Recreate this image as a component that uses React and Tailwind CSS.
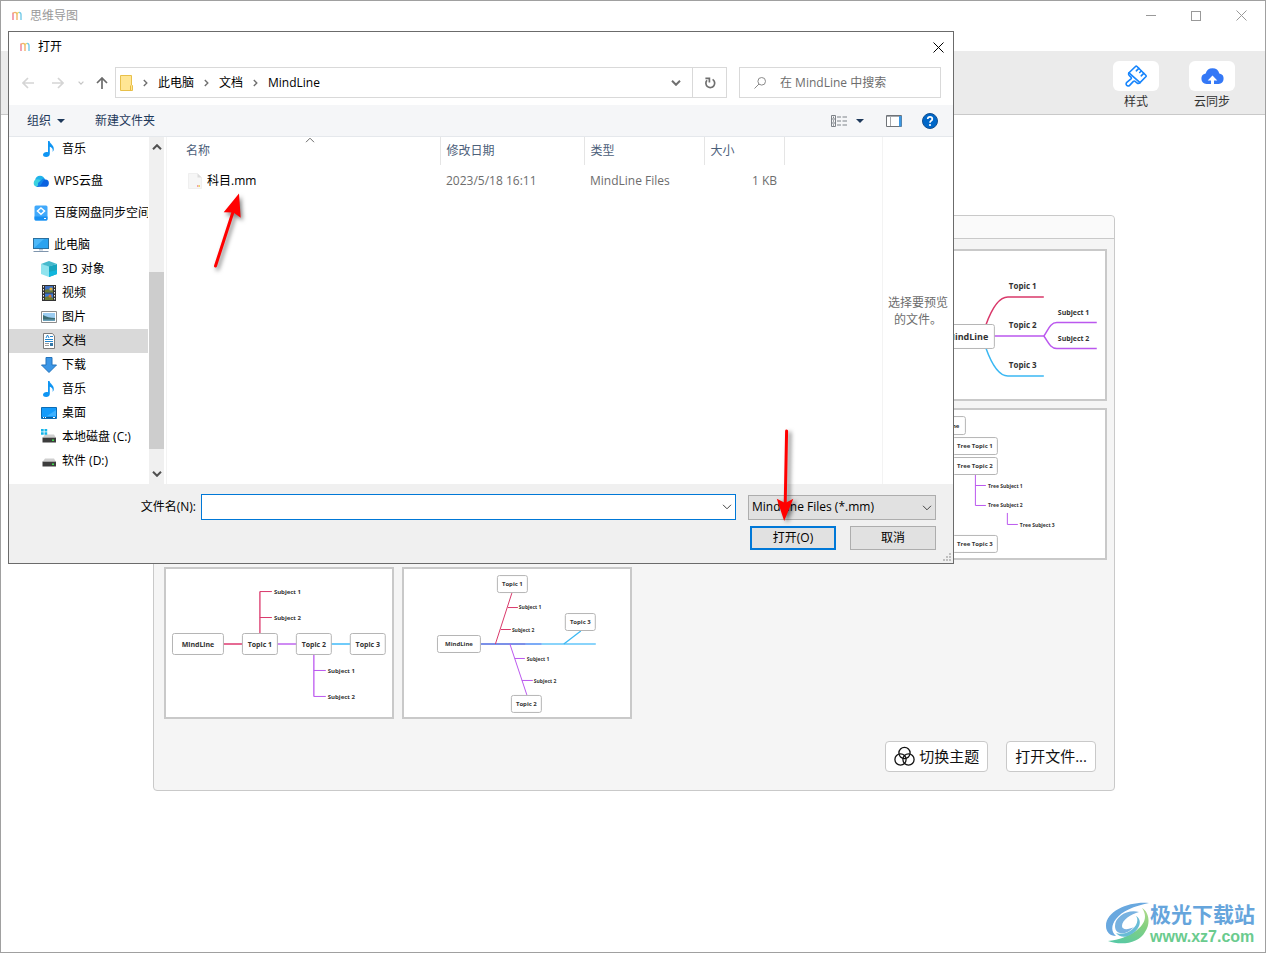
import React, { useState } from "react";

const UI_FONT = "font-['Open_Sans','Noto_Sans_CJK_SC',sans-serif]";

/* ---------- icons ---------- */

function AppMark() {
  return (
    <svg className="h-[10px] w-[10px]" viewBox="0 0 10 10" fill="none" strokeWidth="1.4">
      <path d="M1 9V1.4" stroke="#ee7d93" />
      <path d="M1 2.6Q1.8 1.4 3 1.4Q5 1.4 5 3.6V9" stroke="#f3b26b" />
      <path d="M5 3.4Q5.4 1.4 7 1.4" stroke="#e9d667" />
      <path d="M7 1.4Q9 1.4 9 3.6V9" stroke="#74cbe8" />
    </svg>
  );
}

function CloseIcon() {
  return (
    <svg className="h-[11px] w-[11px]" viewBox="0 0 11 11" fill="none" stroke="currentColor">
      <path d="M.5.5l10 10M10.5.5l-10 10" />
    </svg>
  );
}

function Chevron({ className }) {
  return (
    <svg className={className} viewBox="0 0 10 6" fill="none" stroke="currentColor">
      <path d="M1 .8l4 4 4-4" />
    </svg>
  );
}

function CrumbArrow() {
  return (
    <svg className="h-2 w-[5px] shrink-0 text-[#707070]" viewBox="0 0 5 8" fill="none" stroke="currentColor" strokeWidth="1.4">
      <path d="M.8 1l3 3-3 3" />
    </svg>
  );
}

function Caret() {
  return (
    <svg className="h-1 w-2" viewBox="0 0 8 4" fill="#1e395b">
      <path d="M0 0h8L4 4z" />
    </svg>
  );
}

function ArrowIcon({ className }) {
  return (
    <svg className={className} viewBox="0 0 12 12" fill="none" stroke="currentColor" strokeWidth="1.7">
      <path d="M12 6H1M6 1L1 6l5 5" />
    </svg>
  );
}

function FolderIcon() {
  return (
    <svg className="h-4 w-[13px] shrink-0" viewBox="0 0 13 16">
      <path d="M.5.5h11v9.5l1 .5v5H.5z" fill="#ffe694" stroke="#e8c04a" />
      <path d="M10.5 10.5v5" stroke="#e8b93c" />
    </svg>
  );
}

function RefreshIcon() {
  return (
    <svg className="h-3 w-3" viewBox="0 0 12 12" fill="none" stroke="#6f6f6f" strokeWidth="1.7">
      <path d="M8.6 2.4A4.4 4.4 0 1 1 3 3.2" />
      <path d="M1.4 1.4h4v4" />
    </svg>
  );
}

function SearchIcon() {
  return (
    <svg className="h-3 w-3 shrink-0" viewBox="0 0 12 12" fill="none" stroke="#8a8a8a">
      <circle cx="7.7" cy="4.3" r="3.8" />
      <path d="M5 7L.5 11.5" />
    </svg>
  );
}

function ViewIcon() {
  return (
    <svg className="h-3 w-4" viewBox="0 0 16 12" fill="none" stroke="#7d8288">
      <path d="M.5.5h4v11h-4zM.5 4h4M.5 8h4" />
      <path d="M6 2h4M11.5 2H16M6 6h4M11.5 6H16M6 10h4M11.5 10H16" />
      <path d="M2 2.2h1M2 6h1M2 10h1" stroke="#4f5358" />
    </svg>
  );
}

function PaneIcon() {
  return (
    <svg className="h-3 w-4" viewBox="0 0 16 12" fill="none">
      <path d="M.5.5h15v11H.5z" fill="#fff" stroke="#6f7378" />
      <path d="M1 1.5h14M4.5 2v9" stroke="#a5a8ac" />
      <path d="M13 1h2.5v10.5H13z" fill="#3b97e3" />
    </svg>
  );
}

function HelpIcon() {
  return (
    <svg className="h-4 w-4" viewBox="0 0 16 16" fill="none">
      <circle cx="8" cy="8" r="7.5" fill="#0067c8" stroke="#124f8f" />
      <path d="M5.7 6Q5.8 3.9 8 3.9T10.3 5.900Q10.3 7 9.2 7.7Q8 8.5 8 9.8" stroke="#fff" strokeWidth="1.7" />
      <circle cx="8" cy="12" r="1.1" fill="#fff" />
    </svg>
  );
}

function MusicIcon() {
  return (
    <svg className="h-4 w-4" viewBox="0 0 16 16" fill="#0f95f3">
      <path d="M7 0h1.5c.4 3 4.800 4 4.300 8.600-.2 1.400-.9 2-1.300 2.200.9-2.800-.6-4.200-2.700-5V13c0 1.800-1.700 3-3.700 3-1.700 0-3.100-.8-3.100-2.200 0-1.600 1.800-2.800 3.700-2.800.5 0 .9.1 1.300.2z" />
    </svg>
  );
}

function CloudDriveIcon() {
  return (
    <svg className="h-4 w-4" viewBox="0 0 16 16">
      <circle cx="7" cy="7.5" r="4.8" fill="#21b3ea" />
      <circle cx="4.5" cy="10" r="3.8" fill="#3cd2e0" />
      <path d="M3 13.800h9a3.600 3.600 0 0 0 .5-7.200Q9 7 7.500 10T3 13.800z" fill="#0b62e0" />
      <path d="M5 13.800Q8 13 9 10t3.500-3.400a3 3 0 0 0-2.500-1L5 10z" fill="#1185ea" />
    </svg>
  );
}

function SyncDriveIcon() {
  return (
    <svg className="h-4 w-4" viewBox="0 0 16 16">
      <rect x="1.5" y=".5" width="13" height="15" rx="1.5" fill="#41a9fb" />
      <path d="M1.5 11.5h13V14a1.5 1.5 0 0 1-1.5 1.500H3A1.500 1.500 0 0 1 1.500 14z" fill="#1990f2" />
      <path d="M8 3l3.500 3L8 9.200 4.500 6z" fill="none" stroke="#fff" strokeWidth="1.5" />
      <path d="M11 13.500h2" stroke="#fff" />
    </svg>
  );
}

function ComputerIcon() {
  return (
    <svg className="h-4 w-4" viewBox="0 0 16 16">
      <rect x=".5" y="1.5" width="15" height="10" fill="#4db8f8" stroke="#2b6f9e" />
      <path d="M1 11l10-9h4v9z" fill="#2ba3f0" />
      <path d="M6 12h4v1.5H6z" fill="#b7c6d6" />
      <path d="M.5 14.5h15" stroke="#7f95ad" />
    </svg>
  );
}

function CubeIcon() {
  return (
    <svg className="h-4 w-4" viewBox="0 0 16 16">
      <path d="M0 3l8 2v11l-8-3z" fill="#8fe3ee" />
      <path d="M16 3L8 5v11l8-3z" fill="#18a5bf" />
      <path d="M0 3l8-3 8 3-8 2.5z" fill="#46b9cc" />
      <path d="M8 11l8-2v4l-8 3z" fill="#11b6dd" />
    </svg>
  );
}

function VideoIcon() {
  return (
    <svg className="h-4 w-4" viewBox="0 0 16 16">
      <path d="M1 0h14v16H1z" fill="#333" />
      <path d="M4 1h8v6.5H4z" fill="#3f6fc0" />
      <path d="M4 8.5h8V15H4z" fill="#3d79d4" />
      <path d="M4 5l3-1 2 2 3-1v2.5H4zM4 12l4-1 4 2v2H4z" fill="#6b7c35" />
      <circle cx="10" cy="4" r="1.6" fill="#e3b23a" />
      <circle cx="9" cy="11" r="1.5" fill="#d5742f" />
      <path d="M2.500 1v14M13.500 1v14" stroke="#eee" strokeDasharray="1.5 1.5" />
    </svg>
  );
}

function PictureIcon() {
  return (
    <svg className="h-4 w-4" viewBox="0 0 16 16">
      <path d="M.5 2.5h15v11H.5z" fill="#fff" stroke="#8c8c8c" />
      <path d="M2 4h12v8H2z" fill="#9ccdf2" />
      <path d="M2 6q5 3 12 3v3H2z" fill="#3c6d74" />
      <path d="M2 10.5h12V12H2z" fill="#6ba1b9" />
    </svg>
  );
}

function DocumentIcon() {
  return (
    <svg className="h-4 w-4" viewBox="0 0 16 16" fill="none">
      <path d="M2.500.5h9l2 2.500v12.500h-11z" fill="#fff" stroke="#7b7b7b" />
      <path d="M5 5l1.500-3L8 5M9 3.500h3M4 6.500h8M4 8.500h8" stroke="#2286cf" />
      <path d="M4 10.500h4M4 12.500h4" stroke="#9a9a9a" />
      <path d="M9 10h3v3H9z" fill="#3578a8" />
    </svg>
  );
}

function DownloadIcon() {
  return (
    <svg className="h-4 w-4" viewBox="0 0 16 16">
      <path d="M5 .5h6V8h4.5L8 15.500.5 8H5z" fill="#3b96e6" stroke="#2272bb" />
    </svg>
  );
}

function DesktopIcon() {
  return (
    <svg className="h-4 w-4" viewBox="0 0 16 16">
      <path d="M.5 2.5h15v11H.5z" fill="#139bfb" stroke="#0c6cb5" />
      <path d="M6 11l9-6v6z" fill="#3db0ff" />
      <path d="M1 12.5h14" stroke="#0b5e9e" />
      <path d="M2 12.5h1M4 12.5h1M12 12.5h2" stroke="#fff" />
    </svg>
  );
}

function DiskIcon({ system }) {
  return (
    <svg className="h-4 w-4" viewBox="0 0 16 16">
      <path d="M4 5.5h9l2 3.500H1.500z" fill="#cfcfcf" />
      <path d="M1.500 9H15v4.500H1.500z" fill="#3d3d3d" />
      <path d="M1.500 8.500H15" stroke="#a5a5a5" />
      <path d="M11 11.300h2" stroke="#3fdc4b" strokeWidth="1.5" />
      {system && <path d="M0 0h2.700v2.500H0zM3.500 0h2.700v2.500H3.500zM0 3.300h2.700v2.500H0zM3.500 3.300h2.700v2.500H3.500z" fill="#14b5ea" />}
    </svg>
  );
}

function FileIcon() {
  return (
    <svg className="h-4 w-[14px]" viewBox="0 0 14 16">
      <path d="M.5.5h9l4 4v11H.5z" fill="#f6f6f6" stroke="#efefef" />
      <path d="M9.500.5v4h4z" fill="#dcdcdc" />
      <path d="M9 12h1.500v2H9z" fill="#f2a0ac" />
      <path d="M10.500 12H12v2h-1.500z" fill="#eed56b" />
    </svg>
  );
}

function BrushIcon() {
  return (
    <svg className="h-[22px] w-[22px]" viewBox="0 0 22 22" fill="none" stroke="#1684fc" strokeWidth="1.6" strokeLinejoin="round" strokeLinecap="round">
      <path d="M10.500 1.500Q11.200.8 12 1.500L20.800 10.300Q21.500 11 20.800 11.800L15 17.600 4 7.800z" />
      <path d="M4 7.800Q3 9.200 4 10.200L6.200 12.400Q6.800 13.200 6 13.900L1.800 17.400C-.2 19.200 2.600 22.400 4.600 20.400L8.400 16.400Q9.300 15.600 10.100 16.300L12 18Q13.600 19 15 17.600" />
      <path d="M13.800 3.400L11.300 5.800M16.300 6L14.700 7.500M18.700 8.400L16.200 10.800" />
    </svg>
  );
}

function CloudUploadIcon() {
  return (
    <svg className="h-4 w-[23px]" viewBox="0 0 23 16">
      <path d="M5.500 16a5.300 5.300 0 0 1-.8-10.500 7 7 0 0 1 13.600 0A5.300 5.300 0 0 1 17.500 16z" fill="#3478f6" />
      <path d="M11.500 7.400l4.800 5h-3.300V16h-3v-3.600H6.700z" fill="#fff" />
    </svg>
  );
}

function ThemeIcon() {
  return (
    <svg className="h-[21px] w-[21px]" viewBox="0 0 21 21" fill="none" stroke="#111" strokeWidth="1.3">
      <circle cx="10.5" cy="7" r="5.6" />
      <circle cx="6.5" cy="13.5" r="5.6" />
      <circle cx="14.5" cy="13.5" r="5.6" />
    </svg>
  );
}

/* ---------- mind map templates ---------- */

function Label({ x, y, size, anchor = "start", children }) {
  return (
    <text
      x={x}
      y={y}
      fontSize={size}
      textAnchor={anchor}
      fontWeight="700"
      fill="#333"
      fontFamily="'Open Sans', sans-serif"
    >
      {children}
    </text>
  );
}

function Node({ x, y, w, h, size, children }) {
  return (
    <g>
      <rect x={x} y={y} width={w} height={h} rx="2" fill="#fff" stroke="#b5b5b5" />
      <Label x={x + w / 2} y={y + h / 2 + size * 0.36} size={size} anchor="middle">
        {children}
      </Label>
    </g>
  );
}

function MindMapTemplate() {
  return (
    <svg className="h-[148px] w-full" viewBox="0 0 226 148" fill="none" strokeWidth="1.5">
      <path d="M107 74Q117 46 129 46H165" stroke="#d9386a" />
      <path d="M115 85H165C169 80 171 71.500 178 71.500H218M165 85C169 90 171 97.500 178 97.500H218" stroke="#bb58ee" />
      <path d="M107 97Q117 125 129 125H165" stroke="#3bb8f3" />
      <g strokeWidth="1">
        <Node x={61.5} y={73.5} w={54} h={24} size={9}>MindLine</Node>
      </g>
      <Label x={130} y={38} size={8}>Topic 1</Label>
      <Label x={130} y={77} size={8}>Topic 2</Label>
      <Label x={130} y={117} size={8}>Topic 3</Label>
      <Label x={179} y={64} size={7}>Subject 1</Label>
      <Label x={179} y={90} size={7}>Subject 2</Label>
    </svg>
  );
}

function TreeTemplate() {
  return (
    <svg className="h-[148px] w-full" viewBox="0 0 226 148" fill="none">
      <path d="M96.5 64V95.5H107M96.5 75.5H107M128.5 103V114.5H139" stroke="#bb58ee" />
      <Node x={46.5} y={6.5} w={40} h={18} size={6}>MindLine</Node>
      <Node x={73.5} y={27.5} w={45} h={17} size={6}>Tree Topic 1</Node>
      <Node x={73.5} y={47.5} w={45} h={17} size={6}>Tree Topic 2</Node>
      <Node x={73.5} y={125.5} w={45} h={17} size={6}>Tree Topic 3</Node>
      <Label x={109} y={78} size={5}>Tree Subject 1</Label>
      <Label x={109} y={97} size={5}>Tree Subject 2</Label>
      <Label x={141} y={117} size={5}>Tree Subject 3</Label>
    </svg>
  );
}

function TimelineTemplate() {
  return (
    <svg className="h-[148px] w-full" viewBox="0 0 226 148" fill="none">
      <path d="M57 75H77" stroke="#e66a93" strokeWidth="2" />
      <path d="M111 75H131" stroke="#cf8bf3" strokeWidth="2" />
      <path d="M165 75H185" stroke="#6fcbfa" strokeWidth="2" />
      <path d="M94 65V22.5" stroke="#e0517f" strokeWidth="1.5" />
      <path d="M94 22.5H106M94 48.5H106" stroke="#d9386a" />
      <path d="M148 85V127.5" stroke="#c66ff2" strokeWidth="1.5" />
      <path d="M148 101.5H160M148 127.5H160" stroke="#bb58ee" />
      <Node x={6.5} y={64.5} w={51} h={21} size={7}>MindLine</Node>
      <Node x={76.5} y={64.5} w={35} h={21} size={7}>Topic 1</Node>
      <Node x={130.5} y={64.5} w={35} h={21} size={7}>Topic 2</Node>
      <Node x={184.5} y={64.5} w={35} h={21} size={7}>Topic 3</Node>
      <Label x={108} y={25} size={6}>Subject 1</Label>
      <Label x={108} y={51} size={6}>Subject 2</Label>
      <Label x={162} y={104} size={6}>Subject 1</Label>
      <Label x={162} y={130} size={6}>Subject 2</Label>
    </svg>
  );
}

function FishboneTemplate() {
  return (
    <svg className="h-[148px] w-full" viewBox="0 0 226 148" fill="none">
      <path d="M77 75H122" stroke="#7b90e8" strokeWidth="2" />
      <path d="M122 75H138" stroke="#7cabf7" strokeWidth="2" />
      <path d="M138 75H192" stroke="#8ad4fb" strokeWidth="2" />
      <path d="M108 24L91.5 75M104 38.5H114M97 60.5H107" stroke="#d9386a" />
      <path d="M106 75L123 126M111 89.5H121M118 111.5H129" stroke="#bb58ee" />
      <path d="M160 75L177 62" stroke="#3bb8f3" strokeWidth="1.3" />
      <Node x={33.5} y={66.5} w={43} h={17} size={6}>MindLine</Node>
      <Node x={93.5} y={6.5} w={30} h={17} size={6}>Topic 1</Node>
      <Node x={107.5} y={126.5} w={30} h={17} size={6}>Topic 2</Node>
      <Node x={161.5} y={44.5} w={30} h={17} size={6}>Topic 3</Node>
      <Label x={115} y={40} size={5}>Subject 1</Label>
      <Label x={108} y={63} size={5}>Subject 2</Label>
      <Label x={123} y={92} size={5}>Subject 1</Label>
      <Label x={130} y={114} size={5}>Subject 2</Label>
    </svg>
  );
}

function TemplateCard({ className, children }) {
  return <div className={`h-[152px] border-2 border-[#c9c9c9] bg-white ${className || ""}`}>{children}</div>;
}

function StartPanel() {
  return (
    <section className="mx-auto w-full max-w-[962px] rounded border border-[#c9c9c9] bg-[#f5f5f5]">
      <div className="h-[23px] rounded-t border-b border-[#c9c9c9] bg-[#fafafa]" />
      <div className="grid grid-cols-4 gap-x-2 gap-y-[7px] pt-[10px] pr-[7px] pl-[10px]">
        <TemplateCard className="col-start-4">
          <MindMapTemplate />
        </TemplateCard>
        <TemplateCard className="col-start-4">
          <TreeTemplate />
        </TemplateCard>
        <TemplateCard>
          <TimelineTemplate />
        </TemplateCard>
        <TemplateCard>
          <FishboneTemplate />
        </TemplateCard>
      </div>
      <div className="mt-[22px] flex justify-end gap-[18px] px-[18px] pb-[18px] text-[15px] text-[#111]">
        <button className="flex h-[31px] items-center gap-1 rounded border border-[#c9c9c9] bg-white px-2 whitespace-nowrap">
          <ThemeIcon />
          切换主题
        </button>
        <button className="h-[31px] rounded border border-[#c9c9c9] bg-white px-2 whitespace-nowrap">打开文件...</button>
      </div>
    </section>
  );
}

/* ---------- open file dialog ---------- */

const places = [
  { name: "音乐", icon: <MusicIcon />, child: true, gap: true },
  { name: "WPS云盘", icon: <CloudDriveIcon />, gap: true },
  { name: "百度网盘同步空间", icon: <SyncDriveIcon />, gap: true },
  { name: "此电脑", icon: <ComputerIcon /> },
  { name: "3D 对象", icon: <CubeIcon />, child: true },
  { name: "视频", icon: <VideoIcon />, child: true },
  { name: "图片", icon: <PictureIcon />, child: true },
  { name: "文档", icon: <DocumentIcon />, child: true },
  { name: "下载", icon: <DownloadIcon />, child: true },
  { name: "音乐", icon: <MusicIcon />, child: true },
  { name: "桌面", icon: <DesktopIcon />, child: true },
  { name: "本地磁盘 (C:)", icon: <DiskIcon system />, child: true },
  { name: "软件 (D:)", icon: <DiskIcon />, child: true },
];

function Sidebar() {
  const [selected, setSelected] = useState(7);

  return (
    <div className="flex w-[158px] shrink-0 border-r border-[#f3f3f3]">
      <ul className="w-[139px] overflow-hidden">
        {places.map((place, i) => (
          <li key={i} className={place.gap ? "mb-2" : ""}>
            <button
              onClick={() => setSelected(i)}
              className={`flex h-6 w-full items-center gap-[5px] whitespace-nowrap ${
                place.child ? "pl-8" : "pl-6"
              } ${selected === i ? "bg-[#d9d9d9]" : ""}`}
            >
              <span className="shrink-0">{place.icon}</span>
              {place.name}
            </button>
          </li>
        ))}
      </ul>
      <div className="ml-px flex w-[15px] flex-col items-center bg-[#f0f0f0] py-[7px] text-[#505050]">
        <Chevron className="h-[6px] w-[10px] rotate-180 stroke-2" />
        <div className="mt-[122px] h-[177px] w-full bg-[#cdcdcd]" />
        <Chevron className="mt-auto h-[6px] w-[10px] stroke-2" />
      </div>
    </div>
  );
}

function FileList() {
  return (
    <div className="relative min-w-0 flex-1">
      <span className="absolute top-0 left-[138px] text-[#6b6b6b]">
        <Chevron className="h-[6px] w-[10px] rotate-180" />
      </span>
      <table className="table-fixed text-left">
        <colgroup>
          <col className="w-[273px]" />
          <col className="w-[144px]" />
          <col className="w-[120px]" />
          <col className="w-[80px]" />
        </colgroup>
        <thead className="text-[#4c607a]">
          <tr className="h-7">
            <th className="border-r border-[#e5e5e5] pl-[19px] font-normal">名称</th>
            <th className="border-r border-[#e5e5e5] pl-[6px] font-normal">修改日期</th>
            <th className="border-r border-[#e5e5e5] pl-[6px] font-normal">类型</th>
            <th className="border-r border-[#e5e5e5] pl-[6px] font-normal">大小</th>
          </tr>
        </thead>
        <tbody className="text-[#6d6d6d]">
          <tr className="h-8">
            <td className="pl-[21px] text-black">
              <span className="flex items-center gap-[5px]">
                <FileIcon />
                科目.mm
              </span>
            </td>
            <td className="pl-[6px]">2023/5/18 16:11</td>
            <td className="pl-[6px]">MindLine Files</td>
            <td className="pr-[7px] text-right">1 KB</td>
          </tr>
        </tbody>
      </table>
    </div>
  );
}

function OpenDialog() {
  const [fileName, setFileName] = useState("");

  return (
    <div
      role="dialog"
      aria-label="打开"
      className="absolute top-[30px] left-[7px] w-[946px] border border-[#6b6b6b] bg-white text-xs text-black"
    >
      <div className="flex h-[30px] items-center pr-[9px] pl-[11px]">
        <AppMark />
        <span className="ml-2">打开</span>
        <button aria-label="关闭" className="ml-auto">
          <CloseIcon />
        </button>
      </div>

      <div className="flex items-center pt-[5px] pr-3 pb-[7px] pl-[13px]">
        <div className="flex w-[93px] shrink-0 items-center">
          <ArrowIcon className="h-3 w-3 text-[#d5d5d5]" />
          <ArrowIcon className="ml-[18px] h-3 w-3 rotate-180 text-[#d5d5d5]" />
          <Chevron className="ml-[14px] h-1 w-[6px] stroke-2 text-[#c5c5c5]" />
          <ArrowIcon className="ml-3 h-3 w-3 rotate-90 text-[#6b6b6b]" />
        </div>
        <div className="flex h-[31px] min-w-0 flex-1 border border-[#d9d9d9]">
          <div className="flex flex-1 items-center gap-[10px] pl-1">
            <FolderIcon />
            <CrumbArrow />
            <span>此电脑</span>
            <CrumbArrow />
            <span>文档</span>
            <CrumbArrow />
            <span>MindLine</span>
            <Chevron className="mr-[11px] ml-auto h-[6px] w-[10px] stroke-2 text-[#6f6f6f]" />
          </div>
          <button aria-label="刷新" className="flex w-[34px] items-center justify-center border-l border-[#d9d9d9]">
            <RefreshIcon />
          </button>
        </div>
        <label className="ml-3 flex h-[31px] w-[202px] items-center gap-[14px] border border-[#d9d9d9] pl-[14px]">
          <SearchIcon />
          <input
            aria-label="搜索"
            placeholder="在 MindLine 中搜索"
            className="w-full min-w-0 outline-none placeholder:text-[#6d6d6d]"
          />
        </label>
      </div>

      <div className="flex h-8 items-center border-b border-[#e5e8ec] bg-[#f5f6f8] pr-[15px] pl-[18px] text-[#1e395b]">
        <button className="flex items-center gap-[6px]">
          组织
          <Caret />
        </button>
        <button className="ml-[30px]">新建文件夹</button>
        <button aria-label="视图" className="ml-auto flex items-center gap-[9px]">
          <ViewIcon />
          <Caret />
        </button>
        <button aria-label="预览窗格" className="ml-[22px]">
          <PaneIcon />
        </button>
        <button aria-label="帮助" className="ml-5">
          <HelpIcon />
        </button>
      </div>

      <div className="flex h-[347px]">
        <Sidebar />
        <FileList />
        <div className="flex w-[71px] items-center justify-center border-l border-[#f3f3f3] text-center leading-[17px] text-[#6d6d6d]">
          选择要预览的文件。
        </div>
      </div>

      <div className="relative bg-[#f0f0f0] pt-[10px] pr-[17px] pb-[13px]">
        <div className="flex items-center">
          <label htmlFor="file-name" className="w-[187px] text-right">
            文件名(N):
          </label>
          <div className="ml-[5px] flex h-[26px] flex-1 items-center border border-[#0078d7] bg-white pr-[3px]">
            <input
              id="file-name"
              value={fileName}
              onChange={(e) => setFileName(e.target.value)}
              className="min-w-0 flex-1 px-1 outline-none"
            />
            <Chevron className="h-[6px] w-[10px] text-[#444]" />
          </div>
          <div className="relative ml-3 w-[188px]">
            <select
              aria-label="文件类型"
              className="h-[25px] w-full appearance-none border border-[#adadad] bg-[#e1e1e1] pl-[3px]"
            >
              <option>MindLine Files (*.mm)</option>
            </select>
            <Chevron className="pointer-events-none absolute top-[10px] right-1 h-[6px] w-[10px] text-[#444]" />
          </div>
        </div>
        <div className="mt-[6px] flex justify-end gap-[14px]">
          <button className="h-6 w-[86px] border-2 border-[#0078d7] bg-[#e1e1e1]">打开(O)</button>
          <button className="h-6 w-[86px] border border-[#adadad] bg-[#e1e1e1]">取消</button>
        </div>
        <svg className="absolute right-[2px] bottom-[2px] h-2 w-2" viewBox="0 0 8 8" fill="#bfbfbf">
          <path d="M6 0h2v2H6zM6 3h2v2H6zM6 6h2v2H6zM3 3h2v2H3zM3 6h2v2H3zM0 6h2v2H0z" />
        </svg>
      </div>
    </div>
  );
}

/* ---------- red pointers and site badge ---------- */

function FilePointer() {
  return (
    <svg
      className="pointer-events-none absolute top-[189px] left-[209px] h-20 w-10 drop-shadow-[2px_3px_2px_rgba(0,0,0,0.5)]"
      viewBox="0 0 40 80"
    >
      <path d="M5.500 76L23 22" stroke="#f00" strokeWidth="3" strokeLinecap="round" />
      <path d="M29 3.500L30.700 27.800 23.500 22.500 13.700 22.300z" fill="#f00" />
    </svg>
  );
}

function ButtonPointer() {
  return (
    <svg
      className="pointer-events-none absolute top-[424px] left-[769px] h-[100px] w-[30px] drop-shadow-[3px_2px_2px_rgba(0,0,0,0.5)]"
      viewBox="0 0 30 100"
    >
      <path d="M16.600 6L15.200 80" stroke="#f00" strokeWidth="3" strokeLinecap="round" />
      <path d="M14.200 96L6.800 73.800 15.200 78 23.300 73.800z" fill="#f00" />
    </svg>
  );
}

function SiteBadge() {
  return (
    <div className="pointer-events-none absolute right-[10px] bottom-[6px] flex items-center">
      <svg className="h-[42px] w-11" viewBox="0 0 44 42">
        <defs>
          <linearGradient id="swirl" x1="0.7" y1="0" x2="0.3" y2="1">
            <stop offset="0" stopColor="#a9d98a" />
            <stop offset="0.4" stopColor="#84d07f" />
            <stop offset="1" stopColor="#58c9a4" />
          </linearGradient>
        </defs>
        <path d="M43 1C25-1 0 8 0 24c0 6 4 10 10 10-5-4-5-11 0-17C16 9 28 4 43 1z" fill="#69a8df" />
        <path d="M33 10C21 7 9 15 9 24c0 9 11 10 19 1-6 3-12 3-12-1 0-6 9-12 17-14z" fill="#78b2e0" />
        <path d="M36 6c5 7 4 15-5 22C23 34 13 38 2 39c14 5 31 2 37-9 6-9 4-20-3-24z" fill="url(#swirl)" />
        <path d="M30 14c4 5-1 14-10 17-4 1-8 1-10 0 3 4 9 5 14 2 10-5 13-15 6-19z" fill="#68bcd6" />
      </svg>
      <div>
        <div className="text-[21px] leading-7 font-bold text-[#66a5dc]">极光下载站</div>
        <div className="font-['Liberation_Sans',sans-serif] text-base leading-[18px] font-bold text-[#6acb8e]">www.xz7.com</div>
      </div>
    </div>
  );
}

/* ---------- main window ---------- */

function TitleBar() {
  return (
    <div className="flex h-[29px] items-center pr-[18px] pl-[11px] text-xs text-[#999]">
      <AppMark />
      <span className="ml-2">思维导图</span>
      <div className="ml-auto flex items-center gap-[35px]">
        <button aria-label="最小化" className="h-px w-[10px] bg-[#999]" />
        <button aria-label="最大化" className="h-[10px] w-[10px] border border-[#999]" />
        <button aria-label="关闭">
          <CloseIcon />
        </button>
      </div>
    </div>
  );
}

function ToolButton({ label, children }) {
  return (
    <button className="flex w-[46px] flex-col items-center text-xs text-[#333]">
      <span className="flex h-[30px] w-full items-center justify-center rounded-md bg-white">{children}</span>
      <span className="mt-[2px] leading-[18px]">{label}</span>
    </button>
  );
}

function App() {
  return (
    <div className={`relative min-h-screen overflow-hidden border border-[#a0a0a0] bg-white ${UI_FONT}`}>
      <TitleBar />
      <div className="mt-[21px] flex h-16 justify-end gap-[30px] border-b border-[#c9c9c9] bg-[#ebebeb] pt-[10px] pr-[30px]">
        <ToolButton label="样式">
          <BrushIcon />
        </ToolButton>
        <ToolButton label="云同步">
          <CloudUploadIcon />
        </ToolButton>
      </div>
      <main className="pt-[100px] pl-[2px]">
        <StartPanel />
      </main>
      <OpenDialog />
      <FilePointer />
      <ButtonPointer />
      <SiteBadge />
    </div>
  );
}

export default App;
